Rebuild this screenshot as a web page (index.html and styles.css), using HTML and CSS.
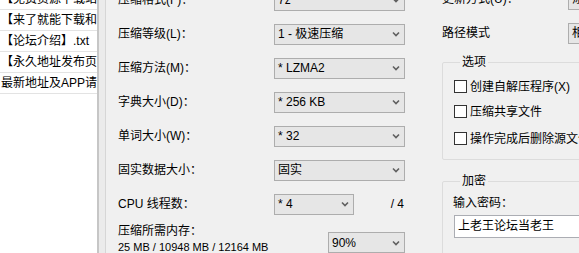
FILE: index.html
```html
<!DOCTYPE html>
<html lang="zh-CN">
<head>
    <meta charset="UTF-8">
    <title>添加到压缩包</title>
    <link rel="stylesheet" href="styles.css">
</head>
<body>
    <div class="window">
        <!-- 文件列表 -->
        <div class="filelist">
            <div class="file-row">【免费资源下载站点】.url</div>
            <div class="file-row">【来了就能下载和谐版】.url</div>
            <div class="file-row">【论坛介绍】.txt</div>
            <div class="file-row">【永久地址发布页】.url</div>
            <div class="file-row">最新地址及APP请访问.txt</div>
        </div>
        <div class="splitter"></div>

        <!-- 压缩设置 -->
        <div class="dialog">
            <div class="col-left">
                <div class="field">
                    <span class="label">压缩格式(F)：</span>
                    <div class="combo"><span>7z</span><svg class="arrow" width="8" height="6" viewBox="0 0 8 6"><path d="M1 1.5 L4 4.5 L7 1.5" /></svg></div>
                </div>
                <div class="field">
                    <span class="label">压缩等级(L)：</span>
                    <div class="combo"><span>1 - 极速压缩</span><svg class="arrow" width="8" height="6" viewBox="0 0 8 6"><path d="M1 1.5 L4 4.5 L7 1.5" /></svg></div>
                </div>
                <div class="field">
                    <span class="label">压缩方法(M)：</span>
                    <div class="combo"><span>* LZMA2</span><svg class="arrow" width="8" height="6" viewBox="0 0 8 6"><path d="M1 1.5 L4 4.5 L7 1.5" /></svg></div>
                </div>
                <div class="field">
                    <span class="label">字典大小(D)：</span>
                    <div class="combo"><span>* 256 KB</span><svg class="arrow" width="8" height="6" viewBox="0 0 8 6"><path d="M1 1.5 L4 4.5 L7 1.5" /></svg></div>
                </div>
                <div class="field">
                    <span class="label">单词大小(W)：</span>
                    <div class="combo"><span>* 32</span><svg class="arrow" width="8" height="6" viewBox="0 0 8 6"><path d="M1 1.5 L4 4.5 L7 1.5" /></svg></div>
                </div>
                <div class="field">
                    <span class="label">固实数据大小：</span>
                    <div class="combo"><span>固实</span><svg class="arrow" width="8" height="6" viewBox="0 0 8 6"><path d="M1 1.5 L4 4.5 L7 1.5" /></svg></div>
                </div>
                <div class="field">
                    <span class="label">CPU 线程数：</span>
                    <div class="control">
                        <div class="combo combo-small"><span>* 4</span><svg class="arrow" width="8" height="6" viewBox="0 0 8 6"><path d="M1 1.5 L4 4.5 L7 1.5" /></svg></div>
                        <span class="threads">/ 4</span>
                    </div>
                </div>
                <div class="field field-mem">
                    <span class="label">压缩所需内存：<br><span class="num">25 MB / 10948 MB / 12164 MB</span></span>
                    <div class="control control-end">
                        <div class="combo combo-mem"><span>90%</span><svg class="arrow" width="8" height="6" viewBox="0 0 8 6"><path d="M1 1.5 L4 4.5 L7 1.5" /></svg></div>
                    </div>
                </div>
            </div>

            <div class="col-right">
                <div class="field">
                    <span class="label label-r">更新方式(U)：</span>
                    <div class="combo combo-r"><span>添加并替换文件</span></div>
                </div>
                <div class="field">
                    <span class="label label-r">路径模式</span>
                    <div class="combo combo-r"><span>相对路径</span></div>
                </div>

                <fieldset class="group group-opts">
                    <legend>选项</legend>
                    <div class="check"><span class="box"></span>创建自解压程序(X)</div>
                    <div class="check"><span class="box"></span>压缩共享文件</div>
                    <div class="check"><span class="box"></span>操作完成后删除源文件</div>
                </fieldset>

                <fieldset class="group group-enc">
                    <legend>加密</legend>
                    <div class="pw-label">输入密码：</div>
                    <div class="pw-input">上老王论坛当老王</div>
                </fieldset>
            </div>
        </div>
    </div>
</body>
</html>
```

FILE: styles.css
```css
body {
    margin: 0;
    width: 579px;
    height: 253px;
    overflow: hidden;
    background: #f0f0f0;
    color: #000;
    font-family: "Liberation Sans", "Noto Sans CJK SC", sans-serif;
    font-size: 12px;
    line-height: 16px;
}

.window {
    display: flex;
    height: 253px;
}

/* 文件列表 */
.filelist {
    width: 97px;
    flex: none;
    background: #fff;
    overflow: hidden;
}

.file-row {
    height: 20px;
    line-height: 20px;
    border-bottom: 1px solid #e3e3e3;
    padding-left: 1px;
    white-space: nowrap;
}

.file-row:first-child {
    margin-top: -11px;
}

.splitter {
    width: 9px;
    flex: none;
    box-sizing: border-box;
    border-left: 2px solid #c6c6c6;
    border-right: 1px solid #d6d6d6;
    background: #ebebeb;
}

/* 对话框 */
.dialog {
    flex: 1;
    display: flex;
    gap: 37px;
    padding-left: 12px;
    overflow: hidden;
}

.col-left {
    width: 287px;
    flex: none;
    margin-top: -17px;
}

.col-right {
    width: 220px;
    flex: none;
    margin-top: -18px;
}

.field {
    display: flex;
    align-items: center;
    height: 34px;
}

.label {
    width: 156px;
    flex: none;
    white-space: nowrap;
}

.label-r {
    width: 126px;
}

.combo {
    width: 131px;
    height: 21px;
    box-sizing: border-box;
    flex: none;
    display: flex;
    align-items: center;
    justify-content: space-between;
    padding: 0 4px 0 3px;
    border: 1px solid #adadad;
    background: #e6e6e6;
    white-space: nowrap;
    overflow: hidden;
}

.arrow path {
    fill: none;
    stroke: #606060;
    stroke-width: 1.6;
}

.control {
    width: 131px;
    display: flex;
    align-items: center;
    justify-content: space-between;
}

.combo-small {
    width: 80px;
}

.threads {
    padding-right: 1px;
}

.field-mem {
    height: auto;
    align-items: flex-start;
    padding-top: 2px;
}

.control-end {
    justify-content: flex-end;
    margin-top: 9px;
}

.combo-mem {
    width: 77px;
}

.num {
    font-size: 11px;
}

.combo-r {
    width: 80px;
}

/* 分组框 */
.group {
    margin: 0;
    padding: 0 0 0 11px;
    border: 1px solid #dcdcdc;
    border-radius: 2px;
}

.group legend {
    margin-left: 6px;
    padding: 0 2px;
    line-height: 16px;
}

.group-opts {
    margin-top: 4px;
    padding-top: 4px;
    padding-bottom: 8px;
}

.check {
    display: flex;
    align-items: center;
    gap: 3px;
    height: 25px;
    white-space: nowrap;
}

.check:last-child {
    height: 27px;
    padding-top: 2px;
    box-sizing: border-box;
}

.box {
    width: 13px;
    height: 13px;
    box-sizing: border-box;
    border: 1px solid #333;
    background: #fff;
    flex: none;
}

.group-enc {
    margin-top: 13px;
    padding-top: 6px;
    height: 120px;
}

.pw-label {
    margin-left: -1px;
}

.pw-input {
    margin-top: 4px;
    width: 160px;
    height: 23px;
    box-sizing: border-box;
    padding-left: 3px;
    line-height: 21px;
    border: 1px solid #abadb3;
    background: #fff;
    white-space: nowrap;
}
```
